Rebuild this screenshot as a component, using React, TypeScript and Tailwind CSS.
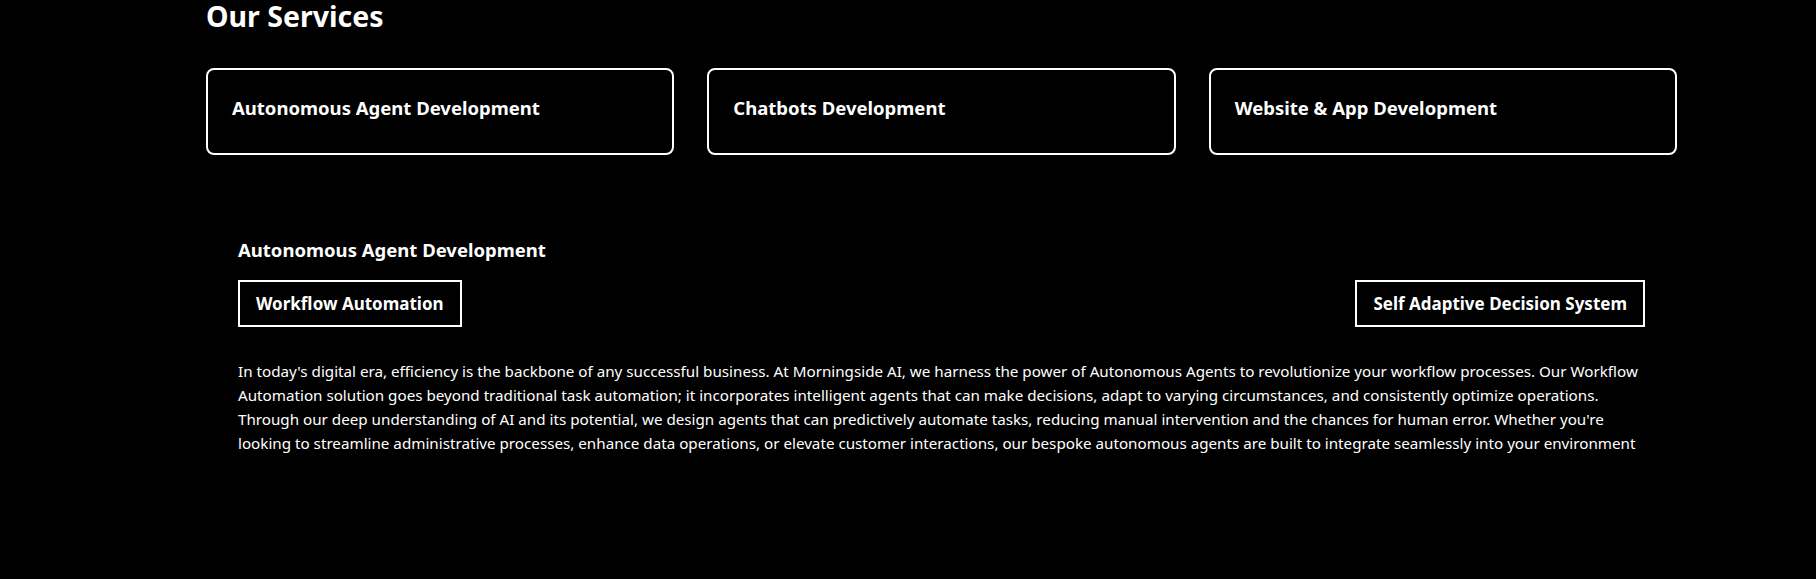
import { useState } from 'react';

const services = [
  { id: 1, title: "Autonomous Agent Development" },
  { id: 2, title: "Chatbots Development" },
  { id: 3, title: "Website & App Development" },
];

const solutions = ["Workflow Automation", "Self Adaptive Decision System"];

export default function App() {
  const [active] = useState(0);

  return (
    <div className="min-h-[579px] w-full bg-black text-white font-['Noto_Sans',Arial,sans-serif]">
      <section className="ml-[206px] w-[1471px]">
        <h2 className="text-[28.5px] leading-8 font-bold">Our Services</h2>

        <div className="mt-9 grid grid-cols-3 gap-[33px]">
          {services.map((item) => (
            <div
              key={item.id}
              className="h-[87px] rounded-lg border-2 border-white px-6 pt-6"
            >
              <h3 className="text-[18.5px] leading-7 font-bold">{item.title}</h3>
            </div>
          ))}
        </div>

        {/* Selected service details */}
        <div className="mt-[81px] px-8">
          <h3 className="text-[18.5px] leading-7 font-bold">{services[active].title}</h3>

          <div className="mt-4 flex justify-between">
            {solutions.map((label) => (
              <button
                key={label}
                className="border-2 border-white px-4 py-[9px] text-[17px] leading-[25px] font-bold"
              >
                {label}
              </button>
            ))}
          </div>

          <p className="mt-8 text-[15.2px] leading-6">
            In today's digital era, efficiency is the backbone of any successful business. At Morningside AI, we harness the power of Autonomous Agents to revolutionize your workflow processes. Our Workflow Automation solution goes beyond traditional task automation; it incorporates intelligent agents that can make decisions, adapt to varying circumstances, and consistently optimize operations. Through our deep understanding of AI and its potential, we design agents that can predictively automate tasks, reducing manual intervention and the chances for human error. Whether you're looking to streamline administrative processes, enhance data operations, or elevate customer interactions, our bespoke autonomous agents are built to integrate seamlessly into your environment
          </p>
        </div>
      </section>
    </div>
  );
}
